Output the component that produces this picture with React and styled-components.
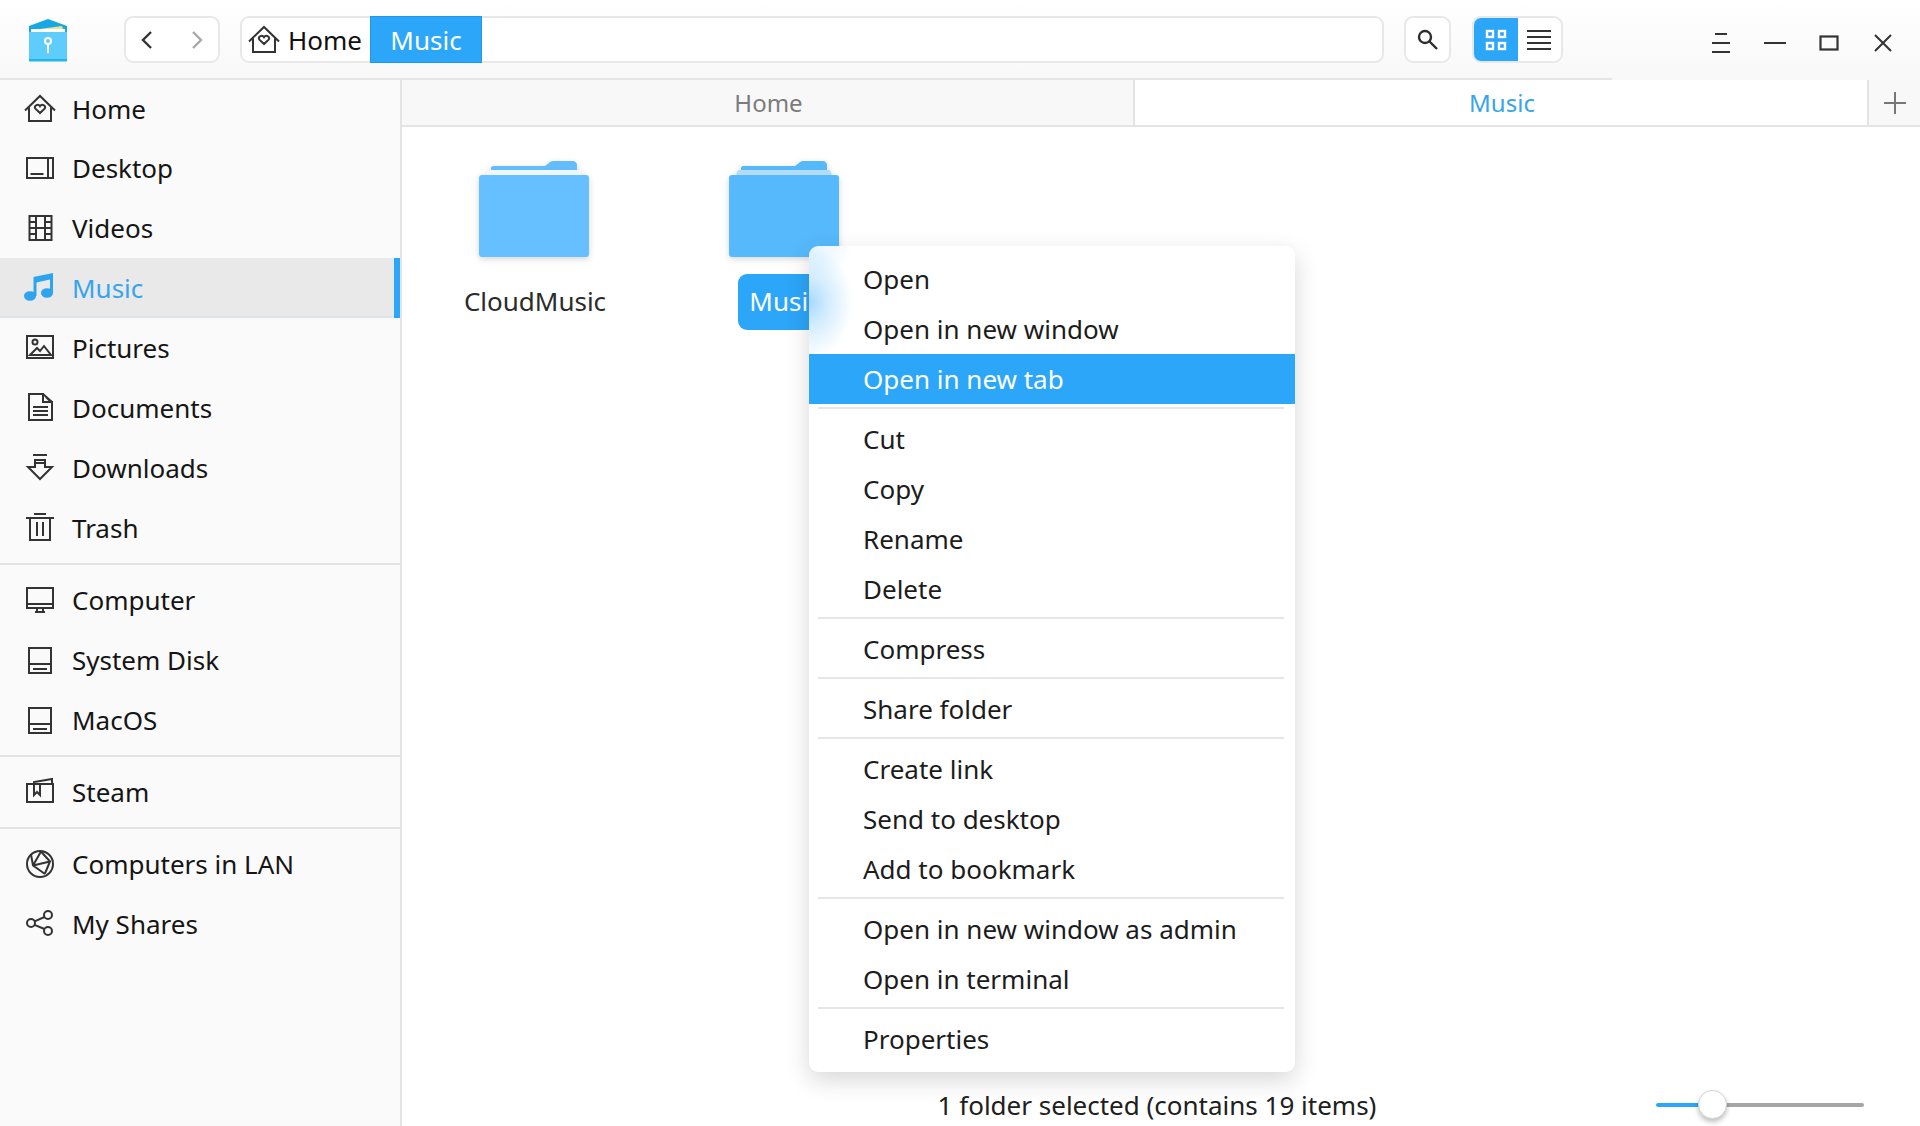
import React from "react"
import styled, { createGlobalStyle } from "styled-components"

const blue = "#2ca6f9"
const ink = "#2b2b2b"
const line = "#e4e4e4"

const GlobalStyle = createGlobalStyle`
  html, body {
    margin: 0;
    padding: 0;
    background: #fff;
  }
  body {
    font-family: "Noto Sans", "Open Sans", sans-serif;
  }
`

const Window = styled.div`
  position: relative;
  width: 1920px;
  height: 1126px;
  display: flex;
  flex-direction: column;
  overflow: hidden;
  background: #fff;
`

const TitleBar = styled.header`
  flex: none;
  height: 80px;
  box-sizing: border-box;
  padding-top: 16px;
  display: flex;
  align-items: flex-start;
  background: linear-gradient(#fff, #f8f8f8);
`

const Logo = styled.div`
  width: 40px;
  height: 44px;
  margin: 2px 56px 0 28px;
  flex: none;
`

const Framed = styled.div`
  height: 47px;
  box-sizing: border-box;
  border: 2px solid #e8e8e8;
  border-radius: 9px;
  background: #fff;
  display: flex;
  align-items: center;
  flex: none;
  overflow: hidden;
`

const NavGroup = styled(Framed)`
  width: 96px;
  margin-right: 20px;
  justify-content: space-between;
  padding: 0 11px;
`

const PathBar = styled(Framed)`
  width: 1144px;
  margin-right: 20px;
  overflow: visible;
`

const Crumb = styled.div`
  display: flex;
  align-items: center;
  gap: 8px;
  padding-left: 6px;
  width: 128px;
  box-sizing: border-box;
  font-size: 26px;
  color: #111;
`

const ActiveCrumb = styled.div`
  width: 112px;
  height: 47px;
  margin: -2px 0;
  box-sizing: border-box;
  background: ${blue};
  border: 1px solid #1f97ea;
  color: #fff;
  font-size: 26px;
  display: flex;
  align-items: center;
  justify-content: center;
`

const SearchButton = styled(Framed)`
  width: 47px;
  margin-right: 21px;
  justify-content: center;
`

const ViewToggle = styled(Framed)`
  width: 91px;
  padding: 0;
`

const ViewOption = styled.div`
  width: 43px;
  flex: 1;
  height: 100%;
  display: flex;
  align-items: center;
  justify-content: center;
  background: ${p => (p.$active ? blue : "transparent")};
`

const WindowButtons = styled.div`
  margin-left: auto;
  display: flex;
  align-items: center;
  height: 54px;
  padding-right: 23px;
  gap: 26px;
`

const WindowButton = styled.div`
  width: 28px;
  height: 28px;
  display: flex;
`

const Body = styled.div`
  flex: 1;
  min-height: 0;
  display: flex;
`

const Sidebar = styled.nav`
  flex: none;
  width: 402px;
  box-sizing: border-box;
  margin-top: -2px;
  border-top: 2px solid ${line};
  border-right: 2px solid ${line};
  background: #fafafa;
  position: relative;
`

const Row = styled.div`
  height: 60px;
  box-sizing: border-box;
  padding-left: 24px;
  display: flex;
  align-items: center;
  gap: 16px;
  font-size: 26px;
  color: ${p => (p.$active ? "#36a5ec" : "#151515")};
  background: ${p => (p.$active ? "#e9e9e9" : "transparent")};
  box-shadow: ${p => (p.$active ? `inset -6px 0 0 ${blue}, inset 0 -2px 0 #dfe4e8` : "none")};
  &:first-child {
    height: 58px;
  }
`

const Divider = styled.div`
  height: 2px;
  margin: 5px 0;
  background: ${line};
`

const Main = styled.main`
  flex: 1;
  min-width: 0;
  display: flex;
  flex-direction: column;
`

const Tabs = styled.div`
  flex: none;
  height: 47px;
  display: flex;
  background: #fff;
`

const Tab = styled.div`
  width: ${p => p.$width}px;
  box-sizing: border-box;
  padding-left: 2px;
  display: flex;
  align-items: center;
  justify-content: center;
  font-size: 24px;
  color: ${p => (p.$active ? "#36a5ec" : "#7b7b7b")};
  background: ${p => (p.$active ? "#fff" : "#f8f8f8")};
  border-bottom: 2px solid ${line};
  border-right: 2px solid ${line};
`

const AddTab = styled.div`
  flex: 1;
  display: flex;
  align-items: center;
  justify-content: center;
  background: #f8f8f8;
  border-bottom: 2px solid ${line};
`

const TopRule = styled.div`
  position: absolute;
  top: 78px;
  left: 0;
  width: 1612px;
  height: 2px;
  background: ${line};
`

const Files = styled.div`
  flex: 1;
  min-height: 0;
  padding: 34px 0 0 7px;
  display: flex;
  align-items: flex-start;
`

const FileItem = styled.div`
  width: 250px;
  display: flex;
  flex-direction: column;
  align-items: center;
`

const FileLabel = styled.div`
  margin-top: 13px;
  height: 56px;
  line-height: 54px;
  padding: 0 9px 0 11px;
  border-radius: 9px;
  font-size: 26px;
  color: ${p => (p.$active ? "#fff" : ink)};
  background: ${p => (p.$active ? blue : "transparent")};
`

const StatusBar = styled.footer`
  flex: none;
  height: 46px;
  box-sizing: border-box;
  padding-top: 3px;
  display: grid;
  grid-template-columns: 1fr auto 1fr;
  align-items: center;
  font-size: 26px;
  color: #202020;
`

const StatusText = styled.div`
  grid-column: 2;
  margin-right: 8px;
`

const Slider = styled.div`
  position: relative;
  grid-column: 3;
  justify-self: end;
  width: 208px;
  height: 4px;
  margin-right: 56px;
  border-radius: 2px;
  background: linear-gradient(90deg, ${blue} 0 56px, #a6a6a6 56px);
`

const Thumb = styled.div`
  position: absolute;
  left: 42px;
  top: -13px;
  width: 29px;
  height: 29px;
  box-sizing: border-box;
  border-radius: 50%;
  background: #fff;
  border: 1px solid #d4d4d4;
  box-shadow: 0 3px 5px rgba(0, 0, 0, 0.25);
`

/* the blue glow stands in for the selected label blurred behind the menu */
const Menu = styled.div`
  position: absolute;
  left: 809px;
  top: 246px;
  width: 486px;
  box-sizing: border-box;
  padding: 8px 0;
  border-radius: 9px;
  background:
    radial-gradient(ellipse 44px 56px at 0 56px, rgba(44, 166, 249, 0.42), rgba(44, 166, 249, 0.2) 45%, rgba(44, 166, 249, 0) 100%),
    radial-gradient(ellipse 44px 34px at 0 0, rgba(86, 185, 252, 0.18), rgba(86, 185, 252, 0) 100%),
    #fff;
  box-shadow: 0 8px 24px rgba(0, 0, 0, 0.16);
`

const MenuItem = styled.div`
  height: 50px;
  padding-left: 54px;
  display: flex;
  align-items: center;
  font-size: 26px;
  color: ${p => (p.$active ? "#fff" : "#1c1c1c")};
  background: ${p => (p.$active ? blue : "transparent")};
`

const MenuLine = styled.div`
  height: 2px;
  margin: 3px 11px 5px 9px;
  background: #e6e6e6;
`

const Svg = styled.svg`
  flex: none;
  display: block;
  fill: none;
  stroke: ${p => p.$color || "#333"};
  stroke-width: ${p => p.$weight || 2};
`

const icon = children => <Svg width="32" height="32" viewBox="0 0 32 32">{children}</Svg>

const heart = <path d="M16 20l-4.600-4.400c-2.200-2.600 2.600-5.400 4.600-2.400 2-3 6.800-.2 4.600 2.400z" />

const HomeGlyph = () => icon(
  <>
    <path d="M1 17.500L16 3l15 14.500M5 14.500V28h22V14.500" />
    {heart}
  </>
)

const icons = {
  home: <HomeGlyph />,
  desktop: icon(<><rect x="3" y="6" width="26" height="20" /><path d="M24 6v20M6.500 22h13" /></>),
  videos: icon(<><rect x="5.500" y="4" width="22" height="24" /><path d="M12 4v24M21 4v24M5.500 10H12M5.500 16h22M5.500 22H12M21 10h6.500M21 22h6.500" /></>),
  music: (
    <Svg width="32" height="32" viewBox="0 0 32 32" $color="none">
      <path fill="#2ea4ef" d="M9.500 5L29 1v20h-3V7.500L12.500 10.500V24h-3z" />
      <ellipse cx="6" cy="24" rx="6" ry="4.800" fill="#2ea4ef" />
      <ellipse cx="23" cy="21" rx="6" ry="4.800" fill="#2ea4ef" />
    </Svg>
  ),
  pictures: icon(<><rect x="3" y="4" width="26" height="22" /><circle cx="11" cy="10" r="2.500" /><path d="M6 23l7-7 3 3 4-5 7 9z" /></>),
  documents: icon(<><path d="M5 2h14v8h9v18H5z" /><path d="M19 2l9 8M22 5l4 4" /><path d="M9 15h15M9 19h15M9 23h15" /></>),
  downloads: icon(<><path d="M9 3h14M11 8h10v7h7L16 27 4 15h7z" /><path d="M11 11h10" /></>),
  trash: icon(<><path d="M2 6h28M10 2h12M6 6v22h20V6M13 10v14M19 10v14" /></>),
  computer: icon(<><rect x="3" y="4" width="26" height="20" /><path d="M3 20h26M11 28h10M13 24v4M19 24v4" /></>),
  disk: icon(<><rect x="5" y="4" width="22" height="25" /><path d="M5 20h22M9 25h14" /></>),
  steam: icon(<><path d="M3 8h26v18H3zM10 8V6l18-3v5M10 8v11l3-3 3 3V8" /></>),
  lan: icon(<><circle cx="16" cy="16" r="13" /><path d="M7 6.500l2 11 12 8.500M9 17.500L17 3.500M17 3.500l9 10-5 12M9 17.500l17-4" /></>),
  share: icon(<><circle cx="24" cy="7" r="4" /><circle cx="7" cy="15" r="4" /><circle cx="24" cy="23" r="4" /><path d="M20.500 9L10.500 13.300M10.500 16.800L20.500 21" /></>),
}

const sidebarGroups = [
  [
    ["home", "Home"],
    ["desktop", "Desktop"],
    ["videos", "Videos"],
    ["music", "Music", true],
    ["pictures", "Pictures"],
    ["documents", "Documents"],
    ["downloads", "Downloads"],
    ["trash", "Trash"],
  ],
  [
    ["computer", "Computer"],
    ["disk", "System Disk"],
    ["disk", "MacOS"],
  ],
  [["steam", "Steam"]],
  [
    ["lan", "Computers in LAN"],
    ["share", "My Shares"],
  ],
]

const menuGroups = [
  ["Open", "Open in new window", "Open in new tab"],
  ["Cut", "Copy", "Rename", "Delete"],
  ["Compress"],
  ["Share folder"],
  ["Create link", "Send to desktop", "Add to bookmark"],
  ["Open in new window as admin", "Open in terminal"],
  ["Properties"],
]

const FolderArt = styled.svg`
  display: block;
  filter: drop-shadow(0 2px 3px rgba(0, 0, 0, 0.16));
`

const Folder = ({ selected }) => (
  <FolderArt width="110" height="100" viewBox="0 0 110 100">
    <path fill={selected ? "#56b9fc" : "#63bdfc"} d="M12 14V7c0-1 1-2 2-2h52l4-3c1-1 2-2 4-2h20c2 0 4 2 4 4v10z" />
    <path fill={selected ? "#b2dcf9" : "#eef7fe"} d="M7 14l2-5h92l2 5z" />
    <rect y="14" width="110" height="82" rx="3" fill={selected ? "#56b9fc" : "#66c0ff"} />
  </FolderArt>
)

const App = () => (
  <Window>
    <GlobalStyle />
    <TitleBar>
      <Logo>
        <svg width="40" height="44" viewBox="0 0 40 44">
          <path fill="#14a8e6" d="M1 8L20 1l19 7v6H1z" />
          <path fill="#f6df8c" d="M4 12l30-4 2 6H4z" />
          <path fill="#fff" d="M3 11h34v4H3z" />
          <path fill="#5fcdfb" d="M1 14h38v29H1z" />
          <path fill="#22b5ec" d="M1 41h38v2.500H1z" />
          <circle cx="20" cy="23" r="3" fill="none" stroke="#fff" strokeWidth="2" />
          <rect x="19" y="25" width="2" height="10" fill="#fff" />
        </svg>
      </Logo>
      <NavGroup>
        <Svg width="20" height="24" viewBox="0 0 20 24" $color="#333" $weight="2.400"><path d="M14 4l-8 8 8 8" /></Svg>
        <Svg width="20" height="24" viewBox="0 0 20 24" $color="#a8a8a8" $weight="2.400"><path d="M6 4l8 8-8 8" /></Svg>
      </NavGroup>
      <PathBar>
        <Crumb>
          <HomeGlyph />
          Home
        </Crumb>
        <ActiveCrumb>Music</ActiveCrumb>
      </PathBar>
      <SearchButton>
        <Svg width="24" height="24" viewBox="0 0 24 24" $color="#2e2e2e" $weight="2.400">
          <circle cx="9" cy="9" r="6" />
          <path d="M13.500 13.500L21 21" />
        </Svg>
      </SearchButton>
      <ViewToggle>
        <ViewOption $active>
          <Svg width="22" height="22" viewBox="0 0 22 22" $color="#fff" $weight="2.400">
            <rect x="2" y="2" width="6" height="6" />
            <rect x="14" y="2" width="6" height="6" />
            <rect x="2" y="14" width="6" height="6" />
            <rect x="14" y="14" width="6" height="6" />
          </Svg>
        </ViewOption>
        <ViewOption>
          <Svg width="24" height="22" viewBox="0 0 24 22" $color="#333" $weight="2">
            <path d="M0 2h24M0 8h24M0 14h24M0 20h24" />
          </Svg>
        </ViewOption>
      </ViewToggle>
      <WindowButtons>
        <WindowButton>
          <Svg width="28" height="28" viewBox="0 0 28 28" $color="#333"><path d="M8 5h12M5 14h18M5 23h18" /></Svg>
        </WindowButton>
        <WindowButton>
          <Svg width="28" height="28" viewBox="0 0 28 28" $color="#333"><path d="M3 14h22" /></Svg>
        </WindowButton>
        <WindowButton>
          <Svg width="28" height="28" viewBox="0 0 28 28" $color="#333" $weight="2.200"><rect x="5.500" y="7.500" width="17" height="13" /></Svg>
        </WindowButton>
        <WindowButton>
          <Svg width="28" height="28" viewBox="0 0 28 28" $color="#333"><path d="M6 6l16 16M22 6L6 22" /></Svg>
        </WindowButton>
      </WindowButtons>
    </TitleBar>
    <TopRule />
    <Body>
      <Sidebar>
        {sidebarGroups.map((group, i) => (
          <React.Fragment key={i}>
            {i > 0 && <Divider />}
            {group.map(([glyph, label, active]) => (
              <Row key={label} $active={active}>
                {icons[glyph]}
                {label}
              </Row>
            ))}
          </React.Fragment>
        ))}
      </Sidebar>
      <Main>
        <Tabs>
          <Tab $width={733}>Home</Tab>
          <Tab $width={734} $active>Music</Tab>
          <AddTab>
            <Svg width="24" height="24" viewBox="0 0 24 24" $color="#777"><path d="M12 1v22M1 12h22" /></Svg>
          </AddTab>
        </Tabs>
        <Files>
          <FileItem>
            <Folder />
            <FileLabel>CloudMusic</FileLabel>
          </FileItem>
          <FileItem>
            <Folder selected />
            <FileLabel $active>Music</FileLabel>
          </FileItem>
        </Files>
        <StatusBar>
          <StatusText>1 folder selected (contains 19 items)</StatusText>
          <Slider>
            <Thumb />
          </Slider>
        </StatusBar>
      </Main>
    </Body>
    <Menu>
      {menuGroups.map((group, i) => (
        <React.Fragment key={i}>
          {i > 0 && <MenuLine />}
          {group.map(label => (
            <MenuItem key={label} $active={label === "Open in new tab"}>{label}</MenuItem>
          ))}
        </React.Fragment>
      ))}
    </Menu>
  </Window>
)

export default App
